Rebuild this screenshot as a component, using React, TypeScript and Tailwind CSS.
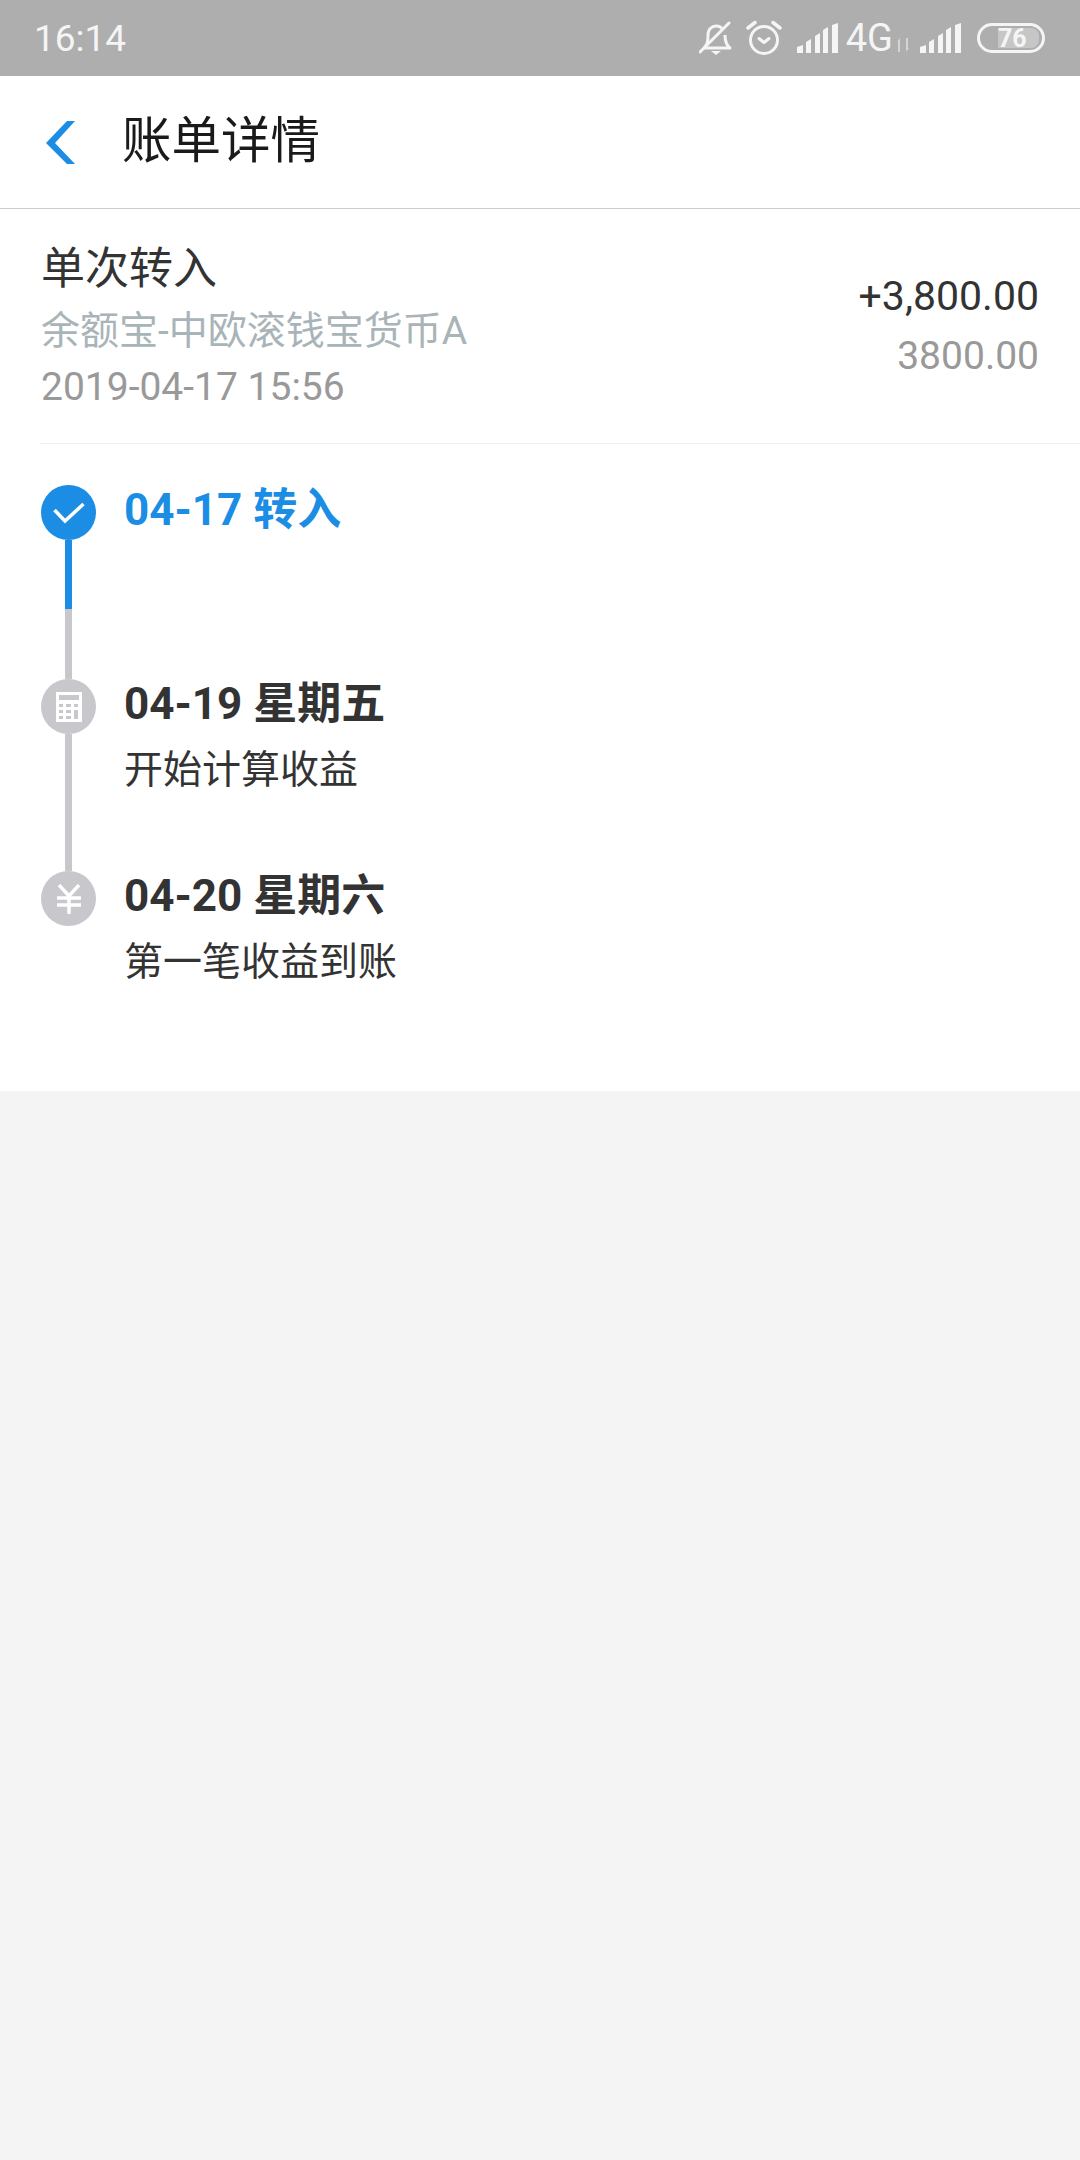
import { ReactNode } from "react";

const font = { fontFamily: '"Roboto", "Noto Sans CJK SC", sans-serif' };

const Signal = () => (
    <svg width="41" height="30" viewBox="0 0 41 30" fill="#f5f5f5">
        <path d="M0 30V24L6 22V30Z" />
        <path d="M9 30V19L14 16V30Z" />
        <path d="M18 30V13L23 10V30Z" />
        <path d="M26 30V7L31 4V30Z" />
        <path d="M35 30V2L41 0V30Z" />
    </svg>
);

const StatusBar = () => (
    <div className="h-[76px] bg-[#aeaeae] flex items-center justify-between pl-[34px] pr-[35px] text-[#f5f5f5]">
        <span className="text-[37px] leading-none">16:14</span>
        <div className="flex items-center">
            {/* muted bell */}
            <svg width="34" height="34" viewBox="0 0 34 34" fill="none" stroke="#f5f5f5" strokeWidth="3">
                <path d="M5 27C9 23 9 19 9 14C9 8 13 5 17 5C20 5 23 7 24 9M26 14C26 20 27 24 31 27H5" strokeLinejoin="round" />
                <path d="M1 31L30 2" strokeLinecap="round" />
                <path d="M12 30H22L17 34Z" fill="#f5f5f5" stroke="none" />
            </svg>
            {/* alarm clock */}
            <svg className="ml-[13px]" width="36" height="36" viewBox="0 0 36 36" fill="none" stroke="#f5f5f5" strokeWidth="3">
                <circle cx="18" cy="20" r="13.5" />
                <path d="M13 18.5L18 22.5L23 18.5" strokeLinecap="round" strokeLinejoin="round" />
                <path d="M2 8L9 2.5M34 8L27 2.5" strokeLinecap="round" strokeWidth="3.5" />
            </svg>
            <div className="ml-[15px]">
                <Signal />
            </div>
            <span className="ml-[8px] text-[38px] leading-none">4G</span>
            <svg className="ml-[4px] mt-[14px]" width="12" height="14" viewBox="0 0 12 14" fill="#d4d4d4">
                <path d="M3 0V14H1V4H0ZM9 0V14L12 10H11V0Z" />
            </svg>
            <div className="ml-[11px]">
                <Signal />
            </div>
            <div className="ml-[16px] w-[68px] h-[30px] rounded-full border-[3px] border-[#f5f5f5] flex items-center pl-[18px] pr-[3px]">
                <div className="h-[20px] flex-1 bg-[#c6c6c6] rounded-r-[8px] flex items-center">
                    <span className="text-[25px] leading-none font-bold text-[#f5f5f5]">76</span>
                </div>
            </div>
        </div>
    </div>
);

const Header = () => (
    <div className="h-[133px] bg-white border-b border-[#cccccc] flex items-center pl-[46px]">
        <svg width="29" height="43" viewBox="0 0 29 43" fill="#1b8de4">
            <polygon points="21,0 29,0 9,22 29,43 21,43 0,22" />
        </svg>
        <h1 className="ml-[47px] text-[49.5px] leading-none text-[#1a1a1a] font-normal">账单详情</h1>
    </div>
);

const Summary = () => (
    <div className="ml-[40px] h-[235px] border-b border-[#f0f0f0] flex justify-between pr-[41px]">
        <div className="pl-[1px]">
            <div className="mt-[36px] text-[44px] leading-[48px] text-[#333333]">单次转入</div>
            <div className="mt-[14px] text-[39px] leading-[48px] text-[#a9b4b8]">余额宝-中欧滚钱宝货币A</div>
            <div className="mt-[8px] text-[39px] leading-[48px] text-[#999999]">2019-04-17 15:56</div>
        </div>
        <div className="flex flex-col items-end pt-[64px]">
            <div className="-mt-[1px] text-[41px] leading-[48px] text-[#333333]">+3,800.00</div>
            <div className="mt-[12px] text-[39px] leading-[48px] text-[#999999]">3800.00</div>
        </div>
    </div>
);

type StepProps = {
    color: string;
    icon: ReactNode;
    title: string;
    titleClass: string;
    desc?: string;
    rail?: ReactNode;
};

const Step = ({ color, icon, title, titleClass, desc, rail }: StepProps) => (
    <div className="flex">
        <div className="w-[55px] flex flex-col items-center">
            <div className={`w-[55px] h-[55px] rounded-full flex items-center justify-center ${color}`}>{icon}</div>
            {rail}
        </div>
        <div className="ml-[28px]">
            <div className={`text-[44px] leading-[50px] font-bold ${titleClass}`}>{title}</div>
            {desc && <div className="mt-[17px] text-[39px] leading-[48px] text-[#333333]">{desc}</div>}
        </div>
    </div>
);

const Timeline = () => (
    <div className="pl-[41px] pt-[41px] h-[647px]">
        <Step
            color="bg-[#1b8de4]"
            title="04-17 转入"
            titleClass="text-[#1b8de4]"
            icon={
                <svg width="32" height="24" viewBox="0 0 32 24" fill="none" stroke="white" strokeWidth="3.5">
                    <path d="M1.5 9L12 20L30.5 3" />
                </svg>
            }
            rail={
                <div className="w-[7px] flex flex-col">
                    <div className="h-[69px] bg-[#1b8de4]" />
                    <div className="h-[70px] bg-[#c7c7cc]" />
                </div>
            }
        />
        <Step
            color="bg-[#c7c7cc]"
            title="04-19 星期五"
            titleClass="text-[#333333]"
            desc="开始计算收益"
            icon={
                <svg width="26" height="30" viewBox="0 0 26 30">
                    <path fillRule="evenodd" fill="white" d="M0 0H26V30H0ZM3 3V8H23V3ZM3 12V15H7V12ZM10 12V15H15V12ZM18 12V15H22V12ZM3 18V21H7V18ZM10 18V21H15V18ZM3 24V27H7V24ZM10 24V27H15V24ZM18 18V27H22V18Z" />
                </svg>
            }
            rail={<div className="w-[7px] h-[137px] bg-[#c7c7cc]" />}
        />
        <Step
            color="bg-[#c7c7cc]"
            title="04-20 星期六"
            titleClass="text-[#333333]"
            desc="第一笔收益到账"
            icon={
                <svg width="24" height="30" viewBox="0 0 24 30" fill="none" stroke="white" strokeWidth="3.5">
                    <path d="M2 1L12 12L22 1M0 14H24M0 21H24M12 12V30" />
                </svg>
            }
        />
    </div>
);

export default function App() {
    return (
        <div className="w-[1080px] h-[2160px] bg-[#f4f4f4] flex flex-col" style={font}>
            <StatusBar />
            <Header />
            <div className="bg-white">
                <Summary />
                <Timeline />
            </div>
        </div>
    );
}
